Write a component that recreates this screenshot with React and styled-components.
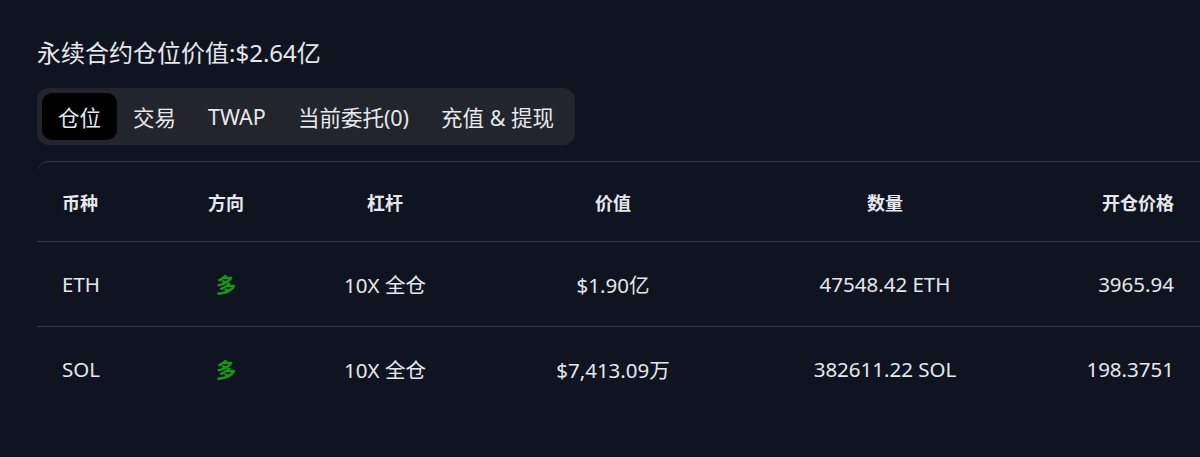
import React from 'react';
import styled, { createGlobalStyle } from 'styled-components';

const GlobalStyle = createGlobalStyle`
  html, body {
    margin: 0;
    padding: 0;
    background: #0f1420;
    overflow: hidden;
  }
  body {
    font-family: "Noto Sans", "Noto Sans CJK SC", sans-serif;
    color: #e6e8ec;
  }
`;

const Page = styled.div`
  width: 1200px;
  height: 457px;
  box-sizing: border-box;
  padding: 36px 0 0 37px;
  background: #0f1420;
  overflow: hidden;
`;

const Title = styled.h2`
  margin: 0;
  font-size: 24px;
  font-weight: 400;
  line-height: 34px;
  color: #e6e8ec;
`;

const TabBar = styled.div`
  display: inline-flex;
  margin-top: 18px;
  padding: 5px;
  background: #22252b;
  border-radius: 12px;
`;

const Tab = styled.div`
  display: flex;
  align-items: center;
  height: 47px;
  padding: 0 16px;
  font-size: 21.5px;
  border-radius: 10px;
  color: #e6e8ec;
  background: ${(p) => (p.active ? '#000' : 'transparent')};
`;

const Table = styled.div`
  margin-top: 16px;
  width: 1180px;
  border-top: 1px solid #353a45;
  border-radius: 12px 0 0 0;
`;

const Row = styled.div`
  display: grid;
  grid-template-columns: 113px 152px 166px 290px 254px 187px;
  align-items: center;
  height: ${(p) => (p.head ? '79px' : '84px')};
  border-bottom: ${(p) => (p.last ? 'none' : '1px solid #343944')};
`;

const Cell = styled.div`
  text-align: ${(p) => p.align || 'center'};
  padding: ${(p) => (p.align === 'left' ? '0 0 0 25px' : p.align === 'right' ? '0 25px 0 0' : '0')};
  font-size: ${(p) => (p.head ? '18px' : '20.5px')};
  font-weight: ${(p) => (p.head || p.green ? 600 : 400)};
  color: ${(p) => (p.green ? '#169a16' : '#e6e8ec')};
  white-space: nowrap;
`;

const columns = [
  { key: 'coin', label: '币种', align: 'left' },
  { key: 'side', label: '方向' },
  { key: 'lev', label: '杠杆' },
  { key: 'value', label: '价值' },
  { key: 'size', label: '数量' },
  { key: 'entry', label: '开仓价格', align: 'right' },
];

const positions = [
  { coin: 'ETH', side: '多', lev: '10X 全仓', value: '$1.90亿', size: '47548.42 ETH', entry: '3965.94' },
  { coin: 'SOL', side: '多', lev: '10X 全仓', value: '$7,413.09万', size: '382611.22 SOL', entry: '198.3751' },
];

const tabs = ['仓位', '交易', 'TWAP', '当前委托(0)', '充值 & 提现'];

export default function App() {
  return (
    <Page>
      <GlobalStyle />
      <Title>永续合约仓位价值:$2.64亿</Title>
      <TabBar>
        {tabs.map((t, i) => (
          <Tab key={t} active={i === 0}>
            {t}
          </Tab>
        ))}
      </TabBar>
      <Table>
        <Row head>
          {columns.map((c) => (
            <Cell key={c.key} head align={c.align}>
              {c.label}
            </Cell>
          ))}
        </Row>
        {positions.map((p, i) => (
          <Row key={p.coin} last={i === positions.length - 1}>
            {columns.map((c) => (
              <Cell key={c.key} align={c.align} green={c.key === 'side'}>
                {p[c.key]}
              </Cell>
            ))}
          </Row>
        ))}
      </Table>
    </Page>
  );
}
